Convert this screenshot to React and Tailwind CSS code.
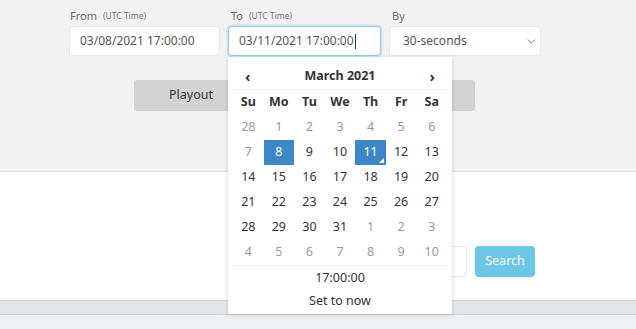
import React from "react";
import { ChevronDown } from "lucide-react";

const font = { fontFamily: '"Noto Sans", "Open Sans", sans-serif' };

const weeks = [
  [[28, 1], [1, 1], [2, 1], [3, 1], [4, 1], [5, 1], [6, 1]],
  [[7, 1], [8, 2], [9, 0], [10, 0], [11, 3], [12, 0], [13, 0]],
  [[14, 0], [15, 0], [16, 0], [17, 0], [18, 0], [19, 0], [20, 0]],
  [[21, 0], [22, 0], [23, 0], [24, 0], [25, 0], [26, 0], [27, 0]],
  [[28, 0], [29, 0], [30, 0], [31, 0], [1, 1], [2, 1], [3, 1]],
  [[4, 1], [5, 1], [6, 1], [7, 1], [8, 1], [9, 1], [10, 1]],
];

function Cell({ d, kind }) {
  if (kind === 2 || kind === 3) {
    return (
      <div className="relative flex h-[25px] items-center justify-center bg-[#3d87c9] text-white">
        {d}
        {kind === 3 && (
          <span className="absolute bottom-[2px] right-[2px] h-0 w-0 border-l-[5px] border-b-[5px] border-l-transparent border-b-white" />
        )}
      </div>
    );
  }
  return (
    <div
      className={
        "flex h-[25px] items-center justify-center " +
        (kind === 1 ? "text-[#9a9a9a]" : "text-[#333]")
      }
    >
      {d}
    </div>
  );
}

function Calendar() {
  return (
    <div className="absolute left-0 top-[31px] z-20 w-[224px] bg-white px-[5px] pt-[7px] pb-[2px] text-[12.5px] shadow-[0_1px_5px_rgba(0,0,0,0.14)]">
      <div className="flex h-[26px] items-center justify-between border-b border-[#eeeeee] px-[12px] text-[#333]">
        <span className="text-[15px] font-bold leading-none">‹</span>
        <span className="text-[12.5px] font-bold">March 2021</span>
        <span className="text-[15px] font-bold leading-none">›</span>
      </div>
      <div className="grid grid-cols-7">
        {["Su", "Mo", "Tu", "We", "Th", "Fr", "Sa"].map((h) => (
          <div key={h} className="flex h-[25px] items-center justify-center font-bold leading-none text-[#333]">
            {h}
          </div>
        ))}
        {weeks.flat().map(([d, k], i) => (
          <Cell key={i} d={d} kind={k} />
        ))}
      </div>
      <div className="border-t border-[#eeeeee]">
        <div className="flex h-[25px] items-center justify-center text-[#333]">17:00:00</div>
        <div className="flex h-[21px] items-center justify-center text-[#333]">Set to now</div>
      </div>
    </div>
  );
}

export default function App() {
  return (
    <div className="min-h-[329px] w-full bg-[#eef2f5]" style={font}>
      <div className="h-[172px] border-b border-[#dddddd] bg-[#f2f2f2] pl-[69px] pt-[6px]">
        <div className="flex gap-[8px]">
          <div className="w-[151px]">
            <div className="flex h-[20px] items-center gap-[6px] pl-[1px] text-[11px] text-[#6b6b6b]">
              From <span className="text-[8.5px] text-[#777]">(UTC Time)</span>
            </div>
            <div className="flex h-[30px] items-center rounded-[4px] border border-[#e6e6e6] bg-white pl-[10px] text-[12px] text-[#555]">
              03/08/2021 17:00:00
            </div>
          </div>
          <div className="relative w-[153px]">
            <div className="flex h-[20px] items-center gap-[6px] pl-[3px] text-[11px] text-[#6b6b6b]">
              To <span className="text-[8.5px] text-[#777]">(UTC Time)</span>
            </div>
            <div className="flex h-[30px] items-center rounded-[4px] border border-[#8fd0e8] bg-white pl-[10px] text-[12px] text-[#555] shadow-[0_0_0_1.5px_rgba(143,208,232,0.4)]">
              03/11/2021 17:00:00
              <span className="ml-[1px] h-[15px] w-px bg-[#333]" />
            </div>
            <div className="absolute left-0 top-[20px]">
              <Calendar />
            </div>
          </div>
          <div className="w-[152px]">
            <div className="flex h-[20px] items-center pl-[3px] text-[11px] text-[#6b6b6b]">By</div>
            <div className="flex h-[30px] items-center justify-between rounded-[4px] border border-[#e6e6e6] bg-white pl-[13px] pr-[2px] text-[12px] text-[#555]">
              30-seconds
              <ChevronDown size={13} strokeWidth={1.6} className="text-[#666]" />
            </div>
          </div>
        </div>
        <div className="mt-[24px] flex gap-[1px] pl-[65px]">
          <div className="flex h-[31px] w-[114px] items-center justify-center rounded-[3px] bg-[#d3d3d3] text-[12.5px] text-[#333]">
            Playout
          </div>
          <div className="flex h-[31px] w-[112px] items-center justify-center rounded-[3px] bg-[#d3d3d3] text-[12.5px] text-[#333]">
            Stop
          </div>
          <div className="flex h-[31px] w-[113px] items-center justify-center rounded-[3px] bg-[#d3d3d3] text-[12.5px] text-[#333]">
            Reset
          </div>
        </div>
      </div>
      <div className="h-[128px] bg-white pt-[74px]">
        <div className="flex justify-end gap-[8px] pr-[101px]">
          <div className="h-[31px] w-[200px] rounded-[4px] border border-[#e6e6e6] bg-white" />
          <div className="flex h-[31px] w-[60px] items-center justify-center rounded-[4px] bg-[#6cc7e6] text-[12.5px] text-white">
            Search
          </div>
        </div>
      </div>
      <div className="h-[15px] border-y border-[#cbcfd3] bg-[#e4e5e7]" />
    </div>
  );
}
